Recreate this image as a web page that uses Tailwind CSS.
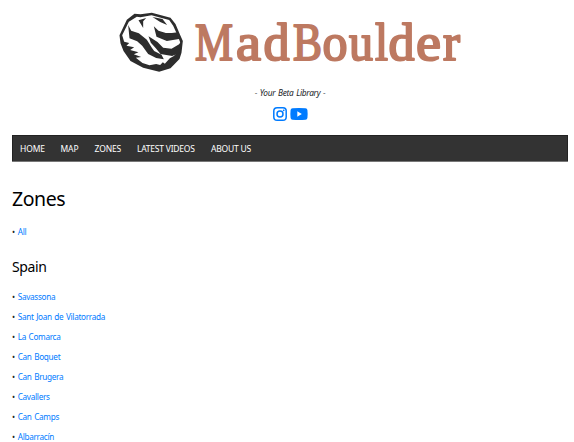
<!DOCTYPE html>
<html lang="en">
<head>
<meta charset="utf-8">
<title>MadBoulder</title>
<script src="https://cdn.jsdelivr.net/npm/@tailwindcss/browser@4"></script>
</head>
<body class="h-[442px] overflow-hidden bg-white pl-3 pr-1.5 font-['Noto_Sans','Open_Sans',sans-serif] text-[#212529]">
<header class="flex h-[135px] flex-col items-center">
  <svg class="h-[86px] w-full shrink-0" viewBox="12 0 556 86" role="img" aria-label="MadBoulder">
    <g transform="translate(110.500 5) scale(.33333)">
      <path fill="#2d2d2d" d="M72 26 90 28 124 23 180 38 195 57 208 88 217 108 213 143 207 162 180 190 146 200 98 188 60 168 39 138 30 115 27 91 49 44Z"/>
      <path fill="#fff" d="M79 35 90 37 123 31 176 45 188 62 201 91 209 112 204 124 183 137 195 140 204 138 190 153 178 160 163 176 157 172 149 180 137 177 117 181 96 174 76 158 92 156 70 148 84 142 59 135 71 127 48 122 56 114 41 110 35 91 55 50Z"/>
      <path fill="#2d2d2d" d="M84 46 107 39 98 49 98 69 91 57ZM126 36 156 42 170 60 149 51ZM53 60 62 77 85 85 109 104 124 128 131 138 153 149 160 163 137 159 113 147 95 122 80 109 57 100ZM130 64 144 77 166 84 184 84 202 82 210 101 169 108 138 95ZM114 94 141 111 158 128 183 131 211 115 211 142 185 153 150 147 136 130 121 113Z"/>
    </g>
    <g font-family="Liberation Serif, serif" font-size="52" fill="#bd7961" stroke="#bd7961" stroke-width="2" stroke-linejoin="round">
      <text x="195" y="59.500" textLength="38" lengthAdjust="spacingAndGlyphs">M</text>
      <text x="236" y="59.500" textLength="25" lengthAdjust="spacingAndGlyphs">a</text>
      <text x="263.500" y="59.500" textLength="26" lengthAdjust="spacingAndGlyphs">d</text>
      <text x="293" y="59.500" textLength="29" lengthAdjust="spacingAndGlyphs">B</text>
      <text x="322.500" y="59.500" textLength="25" lengthAdjust="spacingAndGlyphs">o</text>
      <text x="349" y="59.500" textLength="24" lengthAdjust="spacingAndGlyphs">u</text>
      <text x="375" y="59.500" textLength="13" lengthAdjust="spacingAndGlyphs">l</text>
      <text x="388.500" y="59.500" textLength="26" lengthAdjust="spacingAndGlyphs">d</text>
      <text x="416" y="59.500" textLength="25" lengthAdjust="spacingAndGlyphs">e</text>
      <text x="443" y="59.500" textLength="17" lengthAdjust="spacingAndGlyphs">r</text>
    </g>
  </svg>
  <p class="h-[20px] text-[8.3px]/[13px] italic tracking-[-0.28px] [word-spacing:0.9px]">- Your Beta Library -</p>
  <div class="flex gap-[3px]">
    <svg class="h-4 w-[14px]" viewBox="0 0 14 16" fill="none" stroke="#007bff"><rect x=".8" y="1.8" width="12.400" height="12.400" rx="3.300" stroke-width="1.500"/><circle cx="7" cy="8" r="3" stroke-width="1.500"/><circle cx="10.700" cy="4.300" r=".9" fill="#007bff" stroke="none"/></svg>
    <svg class="h-4 w-[18px]" viewBox="0 0 18 16"><path fill="#007bff" d="M2.500 2.200Q9 1.600 15.500 2.200 17.200 2.400 17.400 4 17.900 8 17.400 12 17.200 13.600 15.500 13.800 9 14.400 2.500 13.800.8 13.600.6 12 .1 8 .6 4 .8 2.400 2.500 2.200Z"/><path fill="#fff" d="m7.300 5.300 4.500 2.700-4.500 2.700Z"/></svg>
  </div>
</header>
<nav class="flex h-[26px] items-center gap-4 border border-b-0 border-[#222] bg-[#333] px-[7px] pt-px text-[8.5px] tracking-[-0.12px] text-white shadow-[0_1px_0_#777]">
  <a class="w-[24.5px] whitespace-nowrap">HOME</a><a class="w-[18px] whitespace-nowrap">MAP</a><a class="w-[26.5px] whitespace-nowrap">ZONES</a><a class="w-[58px] whitespace-nowrap tracking-[-0.22px]">LATEST VIDEOS</a><a class="whitespace-nowrap tracking-[-0.22px]">ABOUT US</a>
</nav>
<main>
  <h1 class="mt-[24px] text-[19.5px]/[28px] tracking-[-0.45px] text-black">Zones</h1>
  <p class="mt-[9px] text-[8.2px]/[20px] tracking-[-0.3px] [word-spacing:0.7px]">• <a class="ml-[0.4px] text-[#007bff]">All</a></p>
  <h2 class="mt-[15px] text-[14px]/[20px] tracking-[-0.35px] text-black">Spain</h2>
  <ul class="mt-[10px] text-[8.2px]/[20px] tracking-[-0.3px] [word-spacing:0.7px]">
    <li>• <a class="ml-[0.4px] text-[#007bff]">Savassona</a></li>
    <li>• <a class="ml-[0.4px] text-[#007bff]">Sant Joan de Vilatorrada</a></li>
    <li>• <a class="ml-[0.4px] text-[#007bff]">La Comarca</a></li>
    <li>• <a class="ml-[0.4px] text-[#007bff]">Can Boquet</a></li>
    <li>• <a class="ml-[0.4px] text-[#007bff]">Can Brugera</a></li>
    <li>• <a class="ml-[0.4px] text-[#007bff]">Cavallers</a></li>
    <li>• <a class="ml-[0.4px] text-[#007bff]">Can Camps</a></li>
    <li>• <a class="ml-[0.4px] text-[#007bff]">Albarracín</a></li>
  </ul>
</main>
</body>
</html>
